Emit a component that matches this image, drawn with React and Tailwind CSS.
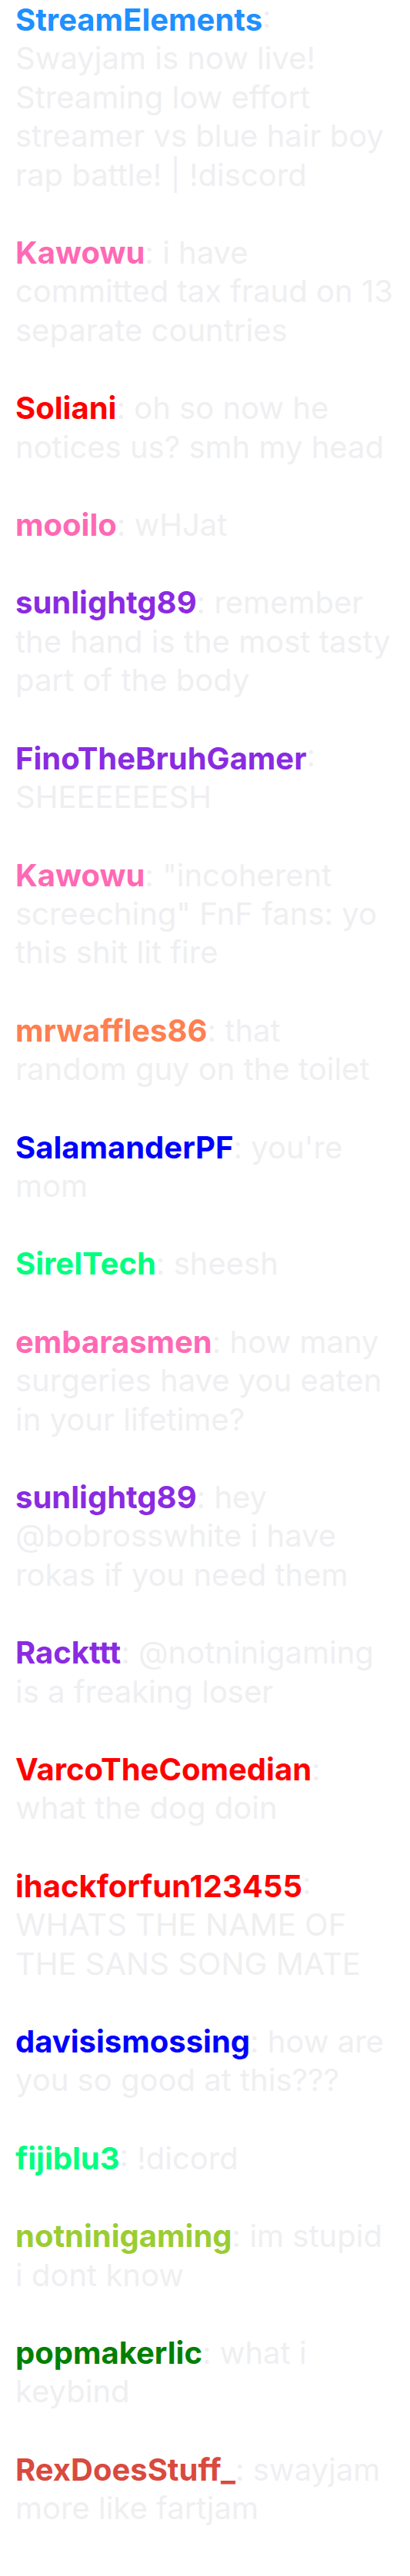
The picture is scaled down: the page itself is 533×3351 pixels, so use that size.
import React from 'react';

const messages = [
  { name: 'StreamElements', color: 'text-[#1e90ff]', text: 'Swayjam is now live! Streaming low effort streamer vs blue hair boy rap battle! | !discord' },
  { name: 'Kawowu', color: 'text-[#ff69b4]', text: 'i have committed tax fraud on 13 separate countries' },
  { name: 'Soliani', color: 'text-[#ff0000]', text: 'oh so now he notices us? smh my head' },
  { name: 'mooilo', color: 'text-[#ff69b4]', text: 'wHJat' },
  { name: 'sunlightg89', color: 'text-[#8a2be2]', text: 'remember the hand is the most tasty part of the body' },
  { name: 'FinoTheBruhGamer', color: 'text-[#8a2be2]', text: 'SHEEEEEESH' },
  { name: 'Kawowu', color: 'text-[#ff69b4]', text: '"incoherent screeching" FnF fans: yo this shit lit fire' },
  { name: 'mrwaffles86', color: 'text-[#ff7f50]', text: 'that random guy on the toilet' },
  { name: 'SalamanderPF', color: 'text-[#0000ff]', text: "you're mom" },
  { name: 'SirelTech', color: 'text-[#00ff7f]', text: 'sheesh' },
  { name: 'embarasmen', color: 'text-[#ff69b4]', text: 'how many surgeries have you eaten in your lifetime?' },
  { name: 'sunlightg89', color: 'text-[#8a2be2]', text: 'hey @bobrosswhite i have rokas if you need them' },
  { name: 'Rackttt', color: 'text-[#8a2be2]', text: '@notninigaming is a freaking loser' },
  { name: 'VarcoTheComedian', color: 'text-[#ff0000]', text: 'what the dog doin' },
  { name: 'ihackforfun123455', color: 'text-[#ff0000]', text: 'WHATS THE NAME OF THE SANS SONG MATE' },
  { name: 'davisismossing', color: 'text-[#0000ff]', text: 'how are you so good at this???' },
  { name: 'fijiblu3', color: 'text-[#00ff7f]', text: '!dicord' },
  { name: 'notninigaming', color: 'text-[#9acd32]', text: 'im stupid i dont know' },
  { name: 'popmakerlic', color: 'text-[#008000]', text: 'what i keybind' },
  { name: 'RexDoesStuff_', color: 'text-[#d94a3e]', text: 'swayjam more like fartjam' },
];

export default function App() {
  return (
    <div className="min-h-[3351px] w-[533px] bg-white px-5 pt-px font-['Inter','Noto_Sans',sans-serif] text-[40px] leading-[50.4px] text-[#efeff1]">
      {messages.map((m, i) => (
        <div key={i} className="mb-[51px] break-words">
          <span className={`font-bold ${m.color}`}>{m.name}</span>
          <span>: {m.text}</span>
        </div>
      ))}
    </div>
  );
}
